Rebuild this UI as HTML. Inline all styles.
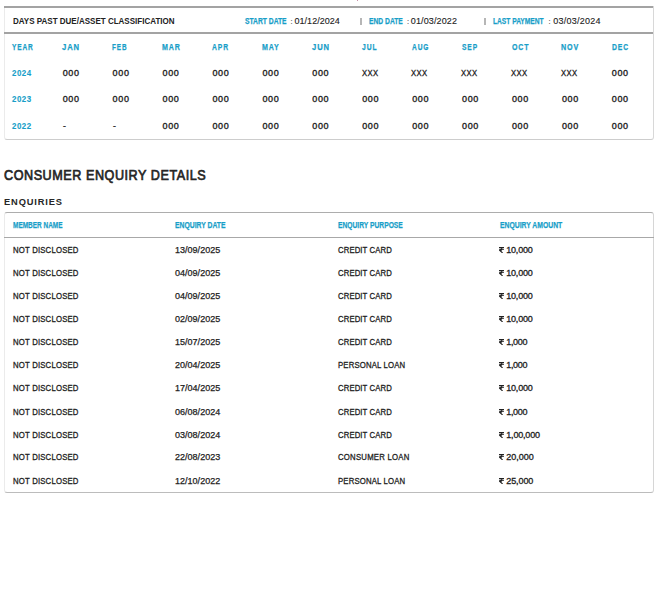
<!DOCTYPE html>
<html><head><meta charset="utf-8"><style>
html,body{margin:0;padding:0;background:#fff;}
body{width:667px;height:608px;position:relative;overflow:hidden;font-family:"Liberation Sans",sans-serif;}
.t{position:absolute;white-space:nowrap;line-height:1;transform-origin:0 0;}
.r{position:absolute;}
.box1{position:absolute;left:4px;top:6px;width:650px;height:134px;box-sizing:border-box;border-left:1px solid #ebebeb;border-right:1px solid #d8d8d8;border-bottom:1px solid #cdcdcd;border-radius:0 0 3px 3px;}
.tl1{position:absolute;left:4px;top:6px;width:649px;height:2px;background:#a3a3a3;}
.hl1{position:absolute;left:4px;top:32px;width:649px;height:2px;background:#a3a3a3;}
.box2{position:absolute;left:4px;top:212px;width:650px;height:281px;box-sizing:border-box;border:1px solid #ebebeb;border-right-color:#d6d6d6;border-top-color:#adadad;border-bottom-color:#bcbcbc;border-radius:3px;}
.hl2{position:absolute;left:4px;top:237px;width:650px;height:1px;background:#a8a8a8;}
.sep{position:absolute;top:18px;width:2px;height:7px;background:#b6b6b6;}
</style></head><body>
<div style="position:absolute;left:357px;top:0;width:1px;height:1px;background:#c890a8;"></div>
<div class="box1"></div><div class="tl1"></div><div class="hl1"></div>
<div class="box2"></div><div class="hl2"></div>
<div class="sep" style="left:360px"></div>
<div class="sep" style="left:484px"></div>
<div class="t" style="left:13.10px;top:16.57px;font-size:9px;font-weight:bold;color:#222222;transform:scaleX(0.8908);">DAYS PAST DUE/ASSET CLASSIFICATION</div>
<div class="t" style="left:244.60px;top:16.57px;font-size:9px;font-weight:bold;color:#189ec8;-webkit-text-stroke:0.25px #189ec8;transform:scaleX(0.7474);">START DATE</div>
<div class="t" style="left:290.60px;top:18.11px;font-size:7.5px;font-weight:normal;color:#222222;-webkit-text-stroke:0.1px #222222;">:</div>
<div class="t" style="left:294.50px;top:16.57px;font-size:9px;font-weight:normal;color:#222222;-webkit-text-stroke:0.12px #222222;letter-spacing:0.029px;">01/12/2024</div>
<div class="t" style="left:368.90px;top:16.57px;font-size:9px;font-weight:bold;color:#189ec8;-webkit-text-stroke:0.25px #189ec8;transform:scaleX(0.7456);">END DATE</div>
<div class="t" style="left:406.90px;top:18.11px;font-size:7.5px;font-weight:normal;color:#222222;-webkit-text-stroke:0.1px #222222;">:</div>
<div class="t" style="left:410.80px;top:16.57px;font-size:9px;font-weight:normal;color:#222222;-webkit-text-stroke:0.12px #222222;letter-spacing:0.129px;">01/03/2022</div>
<div class="t" style="left:493.20px;top:16.57px;font-size:9px;font-weight:bold;color:#189ec8;-webkit-text-stroke:0.25px #189ec8;transform:scaleX(0.7390);">LAST PAYMENT</div>
<div class="t" style="left:548.50px;top:18.11px;font-size:7.5px;font-weight:normal;color:#222222;-webkit-text-stroke:0.1px #222222;">:</div>
<div class="t" style="left:553.20px;top:16.57px;font-size:9px;font-weight:normal;color:#222222;-webkit-text-stroke:0.12px #222222;letter-spacing:0.240px;">03/03/2024</div>
<div class="t" style="left:12.20px;top:42.57px;font-size:9px;font-weight:bold;color:#189ec8;-webkit-text-stroke:0.25px #189ec8;transform:scaleX(0.7253);letter-spacing:1.241px;">YEAR</div>
<div class="t" style="left:62.00px;top:42.57px;font-size:9px;font-weight:bold;color:#189ec8;-webkit-text-stroke:0.25px #189ec8;transform:scaleX(0.8512);letter-spacing:1.057px;">JAN</div>
<div class="t" style="left:112.40px;top:42.57px;font-size:9px;font-weight:bold;color:#189ec8;-webkit-text-stroke:0.25px #189ec8;transform:scaleX(0.7081);letter-spacing:1.271px;">FEB</div>
<div class="t" style="left:162.30px;top:42.57px;font-size:9px;font-weight:bold;color:#189ec8;-webkit-text-stroke:0.25px #189ec8;transform:scaleX(0.7858);letter-spacing:1.145px;">MAR</div>
<div class="t" style="left:212.00px;top:42.57px;font-size:9px;font-weight:bold;color:#189ec8;-webkit-text-stroke:0.25px #189ec8;transform:scaleX(0.7486);letter-spacing:1.202px;">APR</div>
<div class="t" style="left:262.40px;top:42.57px;font-size:9px;font-weight:bold;color:#189ec8;-webkit-text-stroke:0.25px #189ec8;transform:scaleX(0.7825);letter-spacing:1.150px;">MAY</div>
<div class="t" style="left:312.20px;top:42.57px;font-size:9px;font-weight:bold;color:#189ec8;-webkit-text-stroke:0.25px #189ec8;transform:scaleX(0.8455);letter-spacing:1.064px;">JUN</div>
<div class="t" style="left:362.40px;top:42.57px;font-size:9px;font-weight:bold;color:#189ec8;-webkit-text-stroke:0.25px #189ec8;transform:scaleX(0.7484);letter-spacing:1.203px;">JUL</div>
<div class="t" style="left:412.40px;top:42.57px;font-size:9px;font-weight:bold;color:#189ec8;-webkit-text-stroke:0.25px #189ec8;transform:scaleX(0.7300);letter-spacing:1.233px;">AUG</div>
<div class="t" style="left:462.20px;top:42.57px;font-size:9px;font-weight:bold;color:#189ec8;-webkit-text-stroke:0.25px #189ec8;transform:scaleX(0.7386);letter-spacing:1.218px;">SEP</div>
<div class="t" style="left:512.40px;top:42.57px;font-size:9px;font-weight:bold;color:#189ec8;-webkit-text-stroke:0.25px #189ec8;transform:scaleX(0.7795);letter-spacing:1.155px;">OCT</div>
<div class="t" style="left:561.40px;top:42.57px;font-size:9px;font-weight:bold;color:#189ec8;-webkit-text-stroke:0.25px #189ec8;transform:scaleX(0.7949);letter-spacing:1.132px;">NOV</div>
<div class="t" style="left:611.60px;top:42.57px;font-size:9px;font-weight:bold;color:#189ec8;-webkit-text-stroke:0.25px #189ec8;transform:scaleX(0.7538);letter-spacing:1.194px;">DEC</div>
<div class="t" style="left:12.30px;top:68.57px;font-size:9px;font-weight:bold;color:#189ec8;-webkit-text-stroke:0.1px #189ec8;transform:scaleX(0.8800);letter-spacing:0.563px;">2024</div>
<div class="t" style="left:62.70px;top:68.57px;font-size:9px;font-weight:normal;color:#222222;-webkit-text-stroke:0.35px #222222;letter-spacing:0.645px;">000</div>
<div class="t" style="left:112.62px;top:68.57px;font-size:9px;font-weight:normal;color:#222222;-webkit-text-stroke:0.35px #222222;letter-spacing:0.645px;">000</div>
<div class="t" style="left:162.54px;top:68.57px;font-size:9px;font-weight:normal;color:#222222;-webkit-text-stroke:0.35px #222222;letter-spacing:0.645px;">000</div>
<div class="t" style="left:212.46px;top:68.57px;font-size:9px;font-weight:normal;color:#222222;-webkit-text-stroke:0.35px #222222;letter-spacing:0.645px;">000</div>
<div class="t" style="left:262.38px;top:68.57px;font-size:9px;font-weight:normal;color:#222222;-webkit-text-stroke:0.35px #222222;letter-spacing:0.645px;">000</div>
<div class="t" style="left:312.30px;top:68.57px;font-size:9px;font-weight:normal;color:#222222;-webkit-text-stroke:0.35px #222222;letter-spacing:0.645px;">000</div>
<div class="t" style="left:361.52px;top:68.57px;font-size:9px;font-weight:normal;color:#222222;-webkit-text-stroke:0.3px #222222;transform:scaleX(0.8500);letter-spacing:0.526px;">XXX</div>
<div class="t" style="left:411.44px;top:68.57px;font-size:9px;font-weight:normal;color:#222222;-webkit-text-stroke:0.3px #222222;transform:scaleX(0.8500);letter-spacing:0.526px;">XXX</div>
<div class="t" style="left:461.36px;top:68.57px;font-size:9px;font-weight:normal;color:#222222;-webkit-text-stroke:0.3px #222222;transform:scaleX(0.8500);letter-spacing:0.526px;">XXX</div>
<div class="t" style="left:511.28px;top:68.57px;font-size:9px;font-weight:normal;color:#222222;-webkit-text-stroke:0.3px #222222;transform:scaleX(0.8500);letter-spacing:0.526px;">XXX</div>
<div class="t" style="left:561.20px;top:68.57px;font-size:9px;font-weight:normal;color:#222222;-webkit-text-stroke:0.3px #222222;transform:scaleX(0.8500);letter-spacing:0.526px;">XXX</div>
<div class="t" style="left:611.82px;top:68.57px;font-size:9px;font-weight:normal;color:#222222;-webkit-text-stroke:0.35px #222222;letter-spacing:0.645px;">000</div>
<div class="t" style="left:12.30px;top:94.57px;font-size:9px;font-weight:bold;color:#189ec8;-webkit-text-stroke:0.1px #189ec8;transform:scaleX(0.8800);letter-spacing:0.563px;">2023</div>
<div class="t" style="left:62.70px;top:94.57px;font-size:9px;font-weight:normal;color:#222222;-webkit-text-stroke:0.35px #222222;letter-spacing:0.645px;">000</div>
<div class="t" style="left:112.62px;top:94.57px;font-size:9px;font-weight:normal;color:#222222;-webkit-text-stroke:0.35px #222222;letter-spacing:0.645px;">000</div>
<div class="t" style="left:162.54px;top:94.57px;font-size:9px;font-weight:normal;color:#222222;-webkit-text-stroke:0.35px #222222;letter-spacing:0.645px;">000</div>
<div class="t" style="left:212.46px;top:94.57px;font-size:9px;font-weight:normal;color:#222222;-webkit-text-stroke:0.35px #222222;letter-spacing:0.645px;">000</div>
<div class="t" style="left:262.38px;top:94.57px;font-size:9px;font-weight:normal;color:#222222;-webkit-text-stroke:0.35px #222222;letter-spacing:0.645px;">000</div>
<div class="t" style="left:312.30px;top:94.57px;font-size:9px;font-weight:normal;color:#222222;-webkit-text-stroke:0.35px #222222;letter-spacing:0.645px;">000</div>
<div class="t" style="left:362.22px;top:94.57px;font-size:9px;font-weight:normal;color:#222222;-webkit-text-stroke:0.35px #222222;letter-spacing:0.645px;">000</div>
<div class="t" style="left:412.14px;top:94.57px;font-size:9px;font-weight:normal;color:#222222;-webkit-text-stroke:0.35px #222222;letter-spacing:0.645px;">000</div>
<div class="t" style="left:462.06px;top:94.57px;font-size:9px;font-weight:normal;color:#222222;-webkit-text-stroke:0.35px #222222;letter-spacing:0.645px;">000</div>
<div class="t" style="left:511.98px;top:94.57px;font-size:9px;font-weight:normal;color:#222222;-webkit-text-stroke:0.35px #222222;letter-spacing:0.645px;">000</div>
<div class="t" style="left:561.90px;top:94.57px;font-size:9px;font-weight:normal;color:#222222;-webkit-text-stroke:0.35px #222222;letter-spacing:0.645px;">000</div>
<div class="t" style="left:611.82px;top:94.57px;font-size:9px;font-weight:normal;color:#222222;-webkit-text-stroke:0.35px #222222;letter-spacing:0.645px;">000</div>
<div class="t" style="left:12.30px;top:121.57px;font-size:9px;font-weight:bold;color:#189ec8;-webkit-text-stroke:0.1px #189ec8;transform:scaleX(0.8800);letter-spacing:0.563px;">2022</div>
<div class="t" style="left:63.10px;top:121.57px;font-size:9px;font-weight:normal;color:#222222;-webkit-text-stroke:0.3px #222222;transform:scaleX(0.9667);">-</div>
<div class="t" style="left:113.02px;top:121.57px;font-size:9px;font-weight:normal;color:#222222;-webkit-text-stroke:0.3px #222222;transform:scaleX(0.9667);">-</div>
<div class="t" style="left:162.54px;top:121.57px;font-size:9px;font-weight:normal;color:#222222;-webkit-text-stroke:0.35px #222222;letter-spacing:0.645px;">000</div>
<div class="t" style="left:212.46px;top:121.57px;font-size:9px;font-weight:normal;color:#222222;-webkit-text-stroke:0.35px #222222;letter-spacing:0.645px;">000</div>
<div class="t" style="left:262.38px;top:121.57px;font-size:9px;font-weight:normal;color:#222222;-webkit-text-stroke:0.35px #222222;letter-spacing:0.645px;">000</div>
<div class="t" style="left:312.30px;top:121.57px;font-size:9px;font-weight:normal;color:#222222;-webkit-text-stroke:0.35px #222222;letter-spacing:0.645px;">000</div>
<div class="t" style="left:362.22px;top:121.57px;font-size:9px;font-weight:normal;color:#222222;-webkit-text-stroke:0.35px #222222;letter-spacing:0.645px;">000</div>
<div class="t" style="left:412.14px;top:121.57px;font-size:9px;font-weight:normal;color:#222222;-webkit-text-stroke:0.35px #222222;letter-spacing:0.645px;">000</div>
<div class="t" style="left:462.06px;top:121.57px;font-size:9px;font-weight:normal;color:#222222;-webkit-text-stroke:0.35px #222222;letter-spacing:0.645px;">000</div>
<div class="t" style="left:511.98px;top:121.57px;font-size:9px;font-weight:normal;color:#222222;-webkit-text-stroke:0.35px #222222;letter-spacing:0.645px;">000</div>
<div class="t" style="left:561.90px;top:121.57px;font-size:9px;font-weight:normal;color:#222222;-webkit-text-stroke:0.35px #222222;letter-spacing:0.645px;">000</div>
<div class="t" style="left:611.82px;top:121.57px;font-size:9px;font-weight:normal;color:#222222;-webkit-text-stroke:0.35px #222222;letter-spacing:0.645px;">000</div>
<div class="t" style="left:4.20px;top:167.78px;font-size:14px;font-weight:normal;color:#262626;-webkit-text-stroke:0.7px #262626;transform:scaleX(0.9000);letter-spacing:0.611px;">CONSUMER ENQUIRY DETAILS</div>
<div class="t" style="left:4.00px;top:197.13px;font-size:9.9px;font-weight:bold;color:#262626;transform:scaleX(0.9400);letter-spacing:0.924px;">ENQUIRIES</div>
<div class="t" style="left:13.20px;top:220.57px;font-size:9px;font-weight:bold;color:#189ec8;-webkit-text-stroke:0.25px #189ec8;transform:scaleX(0.7174);">MEMBER NAME</div>
<div class="t" style="left:175.20px;top:220.57px;font-size:9px;font-weight:bold;color:#189ec8;-webkit-text-stroke:0.25px #189ec8;transform:scaleX(0.7552);">ENQUIRY DATE</div>
<div class="t" style="left:337.80px;top:220.57px;font-size:9px;font-weight:bold;color:#189ec8;-webkit-text-stroke:0.25px #189ec8;transform:scaleX(0.7444);">ENQUIRY PURPOSE</div>
<div class="t" style="left:499.70px;top:220.57px;font-size:9px;font-weight:bold;color:#189ec8;-webkit-text-stroke:0.25px #189ec8;transform:scaleX(0.7575);">ENQUIRY AMOUNT</div>
<div class="t" style="left:13.20px;top:245.57px;font-size:9px;font-weight:normal;color:#222222;-webkit-text-stroke:0.3px #222222;transform:scaleX(0.8600);letter-spacing:0.228px;">NOT DISCLOSED</div>
<div class="t" style="left:175.00px;top:245.57px;font-size:9px;font-weight:normal;color:#222222;-webkit-text-stroke:0.25px #222222;letter-spacing:0.018px;">13/09/2025</div>
<div class="t" style="left:337.80px;top:245.57px;font-size:9px;font-weight:normal;color:#222222;-webkit-text-stroke:0.3px #222222;transform:scaleX(0.8600);letter-spacing:0.125px;">CREDIT CARD</div>
<div class="t" style="left:506.30px;top:245.57px;font-size:9px;font-weight:normal;color:#222222;-webkit-text-stroke:0.3px #222222;letter-spacing:-0.224px;">10,000</div>
<div class="t" style="left:13.20px;top:268.57px;font-size:9px;font-weight:normal;color:#222222;-webkit-text-stroke:0.3px #222222;transform:scaleX(0.8600);letter-spacing:0.228px;">NOT DISCLOSED</div>
<div class="t" style="left:175.00px;top:268.57px;font-size:9px;font-weight:normal;color:#222222;-webkit-text-stroke:0.25px #222222;letter-spacing:0.018px;">04/09/2025</div>
<div class="t" style="left:337.80px;top:268.57px;font-size:9px;font-weight:normal;color:#222222;-webkit-text-stroke:0.3px #222222;transform:scaleX(0.8600);letter-spacing:0.125px;">CREDIT CARD</div>
<div class="t" style="left:506.30px;top:268.57px;font-size:9px;font-weight:normal;color:#222222;-webkit-text-stroke:0.3px #222222;letter-spacing:-0.224px;">10,000</div>
<div class="t" style="left:13.20px;top:291.57px;font-size:9px;font-weight:normal;color:#222222;-webkit-text-stroke:0.3px #222222;transform:scaleX(0.8600);letter-spacing:0.228px;">NOT DISCLOSED</div>
<div class="t" style="left:175.00px;top:291.57px;font-size:9px;font-weight:normal;color:#222222;-webkit-text-stroke:0.25px #222222;letter-spacing:0.018px;">04/09/2025</div>
<div class="t" style="left:337.80px;top:291.57px;font-size:9px;font-weight:normal;color:#222222;-webkit-text-stroke:0.3px #222222;transform:scaleX(0.8600);letter-spacing:0.125px;">CREDIT CARD</div>
<div class="t" style="left:506.30px;top:291.57px;font-size:9px;font-weight:normal;color:#222222;-webkit-text-stroke:0.3px #222222;letter-spacing:-0.224px;">10,000</div>
<div class="t" style="left:13.20px;top:314.57px;font-size:9px;font-weight:normal;color:#222222;-webkit-text-stroke:0.3px #222222;transform:scaleX(0.8600);letter-spacing:0.228px;">NOT DISCLOSED</div>
<div class="t" style="left:175.00px;top:314.57px;font-size:9px;font-weight:normal;color:#222222;-webkit-text-stroke:0.25px #222222;letter-spacing:0.018px;">02/09/2025</div>
<div class="t" style="left:337.80px;top:314.57px;font-size:9px;font-weight:normal;color:#222222;-webkit-text-stroke:0.3px #222222;transform:scaleX(0.8600);letter-spacing:0.125px;">CREDIT CARD</div>
<div class="t" style="left:506.30px;top:314.57px;font-size:9px;font-weight:normal;color:#222222;-webkit-text-stroke:0.3px #222222;letter-spacing:-0.224px;">10,000</div>
<div class="t" style="left:13.20px;top:337.57px;font-size:9px;font-weight:normal;color:#222222;-webkit-text-stroke:0.3px #222222;transform:scaleX(0.8600);letter-spacing:0.228px;">NOT DISCLOSED</div>
<div class="t" style="left:175.00px;top:337.57px;font-size:9px;font-weight:normal;color:#222222;-webkit-text-stroke:0.25px #222222;letter-spacing:0.018px;">15/07/2025</div>
<div class="t" style="left:337.80px;top:337.57px;font-size:9px;font-weight:normal;color:#222222;-webkit-text-stroke:0.3px #222222;transform:scaleX(0.8600);letter-spacing:0.125px;">CREDIT CARD</div>
<div class="t" style="left:506.30px;top:337.57px;font-size:9px;font-weight:normal;color:#222222;-webkit-text-stroke:0.3px #222222;letter-spacing:-0.354px;">1,000</div>
<div class="t" style="left:13.20px;top:360.57px;font-size:9px;font-weight:normal;color:#222222;-webkit-text-stroke:0.3px #222222;transform:scaleX(0.8600);letter-spacing:0.228px;">NOT DISCLOSED</div>
<div class="t" style="left:175.00px;top:360.57px;font-size:9px;font-weight:normal;color:#222222;-webkit-text-stroke:0.25px #222222;letter-spacing:0.018px;">20/04/2025</div>
<div class="t" style="left:337.80px;top:360.57px;font-size:9px;font-weight:normal;color:#222222;-webkit-text-stroke:0.3px #222222;transform:scaleX(0.8600);letter-spacing:0.189px;">PERSONAL LOAN</div>
<div class="t" style="left:506.30px;top:360.57px;font-size:9px;font-weight:normal;color:#222222;-webkit-text-stroke:0.3px #222222;letter-spacing:-0.354px;">1,000</div>
<div class="t" style="left:13.20px;top:383.57px;font-size:9px;font-weight:normal;color:#222222;-webkit-text-stroke:0.3px #222222;transform:scaleX(0.8600);letter-spacing:0.228px;">NOT DISCLOSED</div>
<div class="t" style="left:175.00px;top:383.57px;font-size:9px;font-weight:normal;color:#222222;-webkit-text-stroke:0.25px #222222;letter-spacing:0.018px;">17/04/2025</div>
<div class="t" style="left:337.80px;top:383.57px;font-size:9px;font-weight:normal;color:#222222;-webkit-text-stroke:0.3px #222222;transform:scaleX(0.8600);letter-spacing:0.125px;">CREDIT CARD</div>
<div class="t" style="left:506.30px;top:383.57px;font-size:9px;font-weight:normal;color:#222222;-webkit-text-stroke:0.3px #222222;letter-spacing:-0.224px;">10,000</div>
<div class="t" style="left:13.20px;top:407.57px;font-size:9px;font-weight:normal;color:#222222;-webkit-text-stroke:0.3px #222222;transform:scaleX(0.8600);letter-spacing:0.228px;">NOT DISCLOSED</div>
<div class="t" style="left:175.00px;top:407.57px;font-size:9px;font-weight:normal;color:#222222;-webkit-text-stroke:0.25px #222222;letter-spacing:0.018px;">06/08/2024</div>
<div class="t" style="left:337.80px;top:407.57px;font-size:9px;font-weight:normal;color:#222222;-webkit-text-stroke:0.3px #222222;transform:scaleX(0.8600);letter-spacing:0.125px;">CREDIT CARD</div>
<div class="t" style="left:506.30px;top:407.57px;font-size:9px;font-weight:normal;color:#222222;-webkit-text-stroke:0.3px #222222;letter-spacing:-0.354px;">1,000</div>
<div class="t" style="left:13.20px;top:430.57px;font-size:9px;font-weight:normal;color:#222222;-webkit-text-stroke:0.3px #222222;transform:scaleX(0.8600);letter-spacing:0.228px;">NOT DISCLOSED</div>
<div class="t" style="left:175.00px;top:430.57px;font-size:9px;font-weight:normal;color:#222222;-webkit-text-stroke:0.25px #222222;letter-spacing:0.018px;">03/08/2024</div>
<div class="t" style="left:337.80px;top:430.57px;font-size:9px;font-weight:normal;color:#222222;-webkit-text-stroke:0.3px #222222;transform:scaleX(0.8600);letter-spacing:0.125px;">CREDIT CARD</div>
<div class="t" style="left:506.30px;top:430.57px;font-size:9px;font-weight:normal;color:#222222;-webkit-text-stroke:0.3px #222222;letter-spacing:-0.190px;">1,00,000</div>
<div class="t" style="left:13.20px;top:452.57px;font-size:9px;font-weight:normal;color:#222222;-webkit-text-stroke:0.3px #222222;transform:scaleX(0.8600);letter-spacing:0.228px;">NOT DISCLOSED</div>
<div class="t" style="left:175.00px;top:452.57px;font-size:9px;font-weight:normal;color:#222222;-webkit-text-stroke:0.25px #222222;letter-spacing:0.018px;">22/08/2023</div>
<div class="t" style="left:337.80px;top:452.57px;font-size:9px;font-weight:normal;color:#222222;-webkit-text-stroke:0.3px #222222;transform:scaleX(0.8600);letter-spacing:0.276px;">CONSUMER LOAN</div>
<div class="t" style="left:506.30px;top:452.57px;font-size:9px;font-weight:normal;color:#222222;-webkit-text-stroke:0.3px #222222;letter-spacing:-0.024px;">20,000</div>
<div class="t" style="left:13.20px;top:476.57px;font-size:9px;font-weight:normal;color:#222222;-webkit-text-stroke:0.3px #222222;transform:scaleX(0.8600);letter-spacing:0.228px;">NOT DISCLOSED</div>
<div class="t" style="left:175.00px;top:476.57px;font-size:9px;font-weight:normal;color:#222222;-webkit-text-stroke:0.25px #222222;letter-spacing:0.018px;">12/10/2022</div>
<div class="t" style="left:337.80px;top:476.57px;font-size:9px;font-weight:normal;color:#222222;-webkit-text-stroke:0.3px #222222;transform:scaleX(0.8600);letter-spacing:0.189px;">PERSONAL LOAN</div>
<div class="t" style="left:506.30px;top:476.57px;font-size:9px;font-weight:normal;color:#222222;-webkit-text-stroke:0.3px #222222;letter-spacing:-0.104px;">25,000</div>
<svg class="r" style="left:499px;top:247px" width="5" height="6" viewBox="0 0 5 6"><path d="M0 0.5H5M0 2.3H5M0.6 0.5C3.9 0.5 3.9 3.5 0.8 3.5L3.6 6" fill="none" stroke="#222222" stroke-width="1.05"/></svg>
<svg class="r" style="left:499px;top:270px" width="5" height="6" viewBox="0 0 5 6"><path d="M0 0.5H5M0 2.3H5M0.6 0.5C3.9 0.5 3.9 3.5 0.8 3.5L3.6 6" fill="none" stroke="#222222" stroke-width="1.05"/></svg>
<svg class="r" style="left:499px;top:293px" width="5" height="6" viewBox="0 0 5 6"><path d="M0 0.5H5M0 2.3H5M0.6 0.5C3.9 0.5 3.9 3.5 0.8 3.5L3.6 6" fill="none" stroke="#222222" stroke-width="1.05"/></svg>
<svg class="r" style="left:499px;top:316px" width="5" height="6" viewBox="0 0 5 6"><path d="M0 0.5H5M0 2.3H5M0.6 0.5C3.9 0.5 3.9 3.5 0.8 3.5L3.6 6" fill="none" stroke="#222222" stroke-width="1.05"/></svg>
<svg class="r" style="left:499px;top:339px" width="5" height="6" viewBox="0 0 5 6"><path d="M0 0.5H5M0 2.3H5M0.6 0.5C3.9 0.5 3.9 3.5 0.8 3.5L3.6 6" fill="none" stroke="#222222" stroke-width="1.05"/></svg>
<svg class="r" style="left:499px;top:362px" width="5" height="6" viewBox="0 0 5 6"><path d="M0 0.5H5M0 2.3H5M0.6 0.5C3.9 0.5 3.9 3.5 0.8 3.5L3.6 6" fill="none" stroke="#222222" stroke-width="1.05"/></svg>
<svg class="r" style="left:499px;top:385px" width="5" height="6" viewBox="0 0 5 6"><path d="M0 0.5H5M0 2.3H5M0.6 0.5C3.9 0.5 3.9 3.5 0.8 3.5L3.6 6" fill="none" stroke="#222222" stroke-width="1.05"/></svg>
<svg class="r" style="left:499px;top:409px" width="5" height="6" viewBox="0 0 5 6"><path d="M0 0.5H5M0 2.3H5M0.6 0.5C3.9 0.5 3.9 3.5 0.8 3.5L3.6 6" fill="none" stroke="#222222" stroke-width="1.05"/></svg>
<svg class="r" style="left:499px;top:432px" width="5" height="6" viewBox="0 0 5 6"><path d="M0 0.5H5M0 2.3H5M0.6 0.5C3.9 0.5 3.9 3.5 0.8 3.5L3.6 6" fill="none" stroke="#222222" stroke-width="1.05"/></svg>
<svg class="r" style="left:499px;top:454px" width="5" height="6" viewBox="0 0 5 6"><path d="M0 0.5H5M0 2.3H5M0.6 0.5C3.9 0.5 3.9 3.5 0.8 3.5L3.6 6" fill="none" stroke="#222222" stroke-width="1.05"/></svg>
<svg class="r" style="left:499px;top:478px" width="5" height="6" viewBox="0 0 5 6"><path d="M0 0.5H5M0 2.3H5M0.6 0.5C3.9 0.5 3.9 3.5 0.8 3.5L3.6 6" fill="none" stroke="#222222" stroke-width="1.05"/></svg>
</body></html>
